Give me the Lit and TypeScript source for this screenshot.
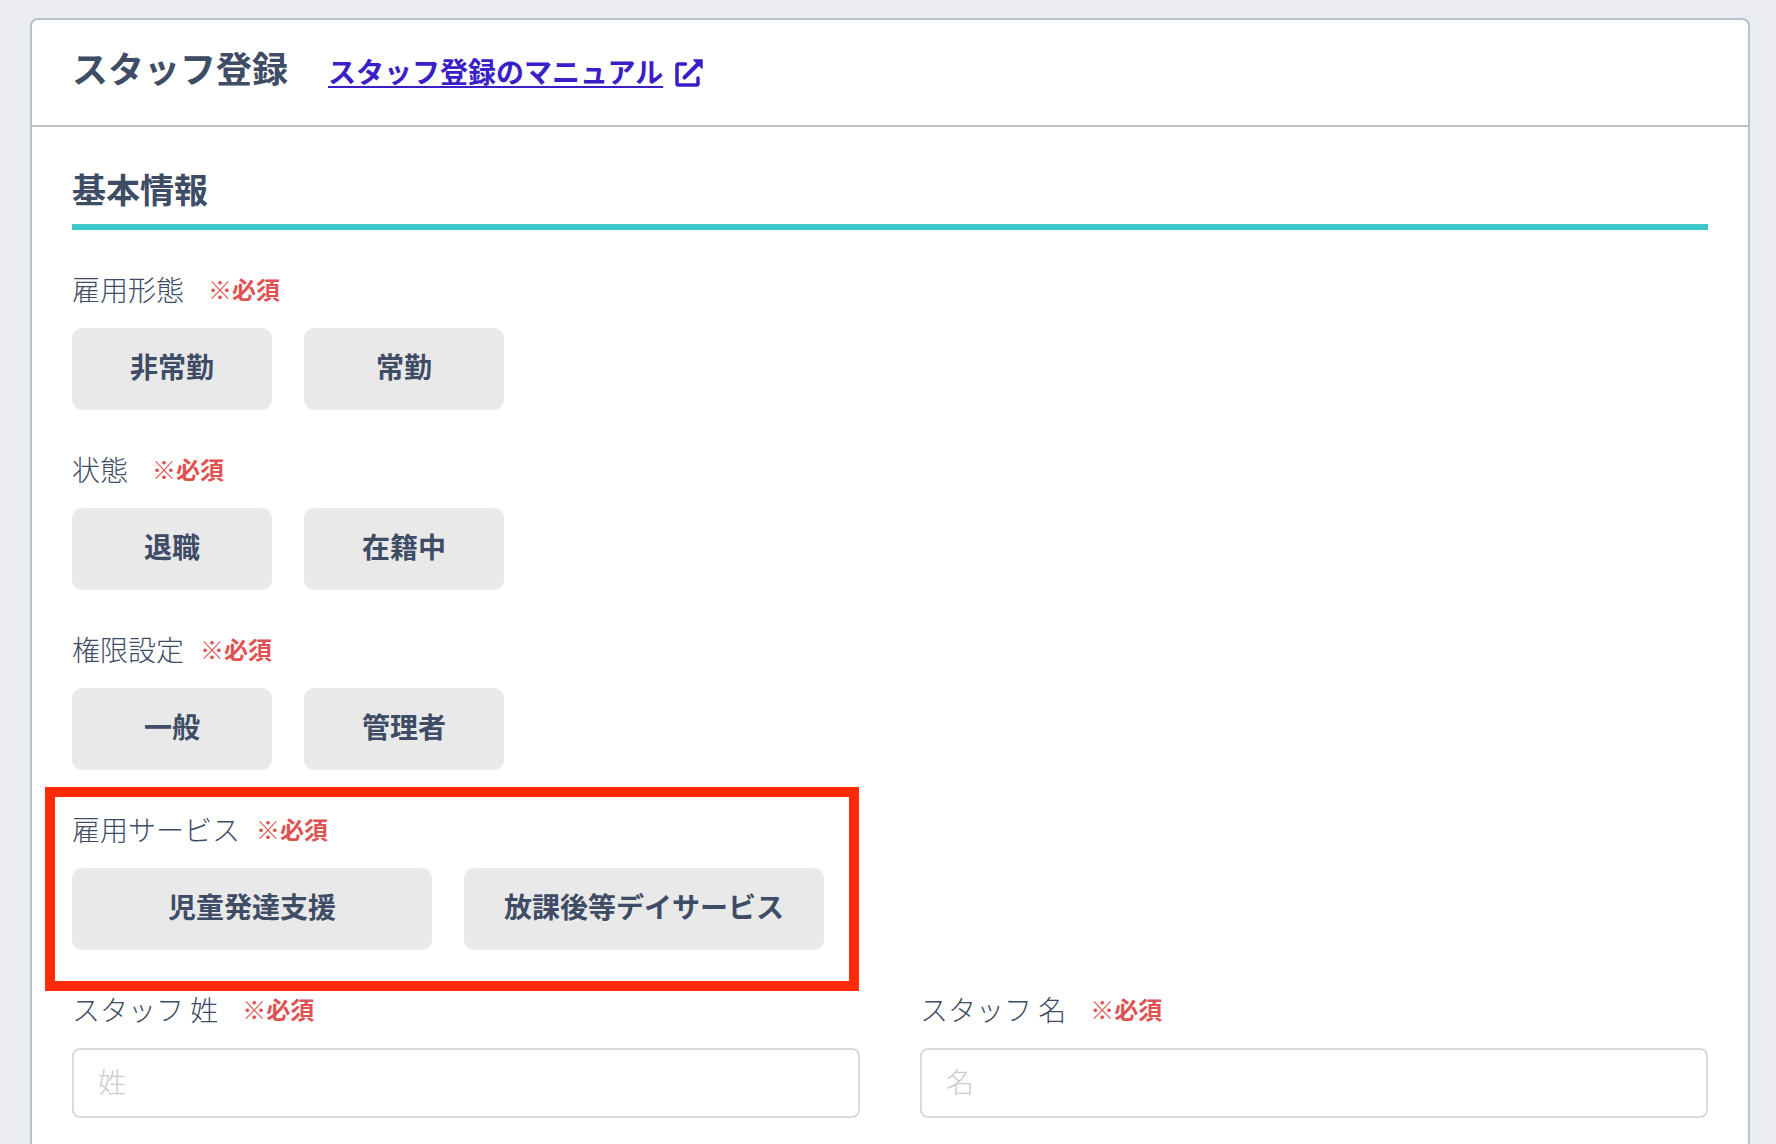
import { LitElement, html, css } from "lit";
import { customElement, property, state } from "lit/decorators.js";
import { classMap } from "lit/directives/class-map.js";

interface ChoiceField {
  id: string;
  label: string;
  options: string[];
  wide?: boolean;
  compact?: boolean;
  marked?: boolean;
}

interface TextField {
  id: string;
  label: string;
  placeholder: string;
}

const CHOICES: ChoiceField[] = [
  { id: "employment", label: "雇用形態", options: ["非常勤", "常勤"] },
  { id: "status", label: "状態", options: ["退職", "在籍中"] },
  { id: "role", label: "権限設定", options: ["一般", "管理者"], compact: true },
  {
    id: "service",
    label: "雇用サービス",
    options: ["児童発達支援", "放課後等デイサービス"],
    wide: true,
    compact: true,
    marked: true,
  },
];

const NAMES: TextField[] = [
  { id: "last-name", label: "スタッフ 姓", placeholder: "姓" },
  { id: "first-name", label: "スタッフ 名", placeholder: "名" },
];

const fieldStyles = css`
  .caption {
    display: flex;
    align-items: center;
    gap: 24px;
    margin-bottom: 18px;
    font-size: 28px;
    font-weight: 300;
    line-height: 42px;
    white-space: nowrap;
  }
  .caption.compact {
    gap: 16px;
  }
  .required {
    color: #e05252;
    font-size: 24px;
    font-weight: 700;
  }
`;

@customElement("choice-field")
export class ChoiceFieldElement extends LitElement {
  @property({ attribute: false }) field!: ChoiceField;
  @state() private selected = "";

  static styles = [
    fieldStyles,
    css`
      :host {
        display: block;
      }
      .group {
        position: relative;
        width: fit-content;
      }
      .marked::after {
        content: "";
        position: absolute;
        inset: -21px -35px -41px -27px;
        border: 10px solid #ff2a08;
        pointer-events: none;
      }
      .options {
        display: flex;
        gap: 32px;
      }
      .option {
        width: 200px;
        height: 82px;
        padding: 0 0 6px;
        border: 0;
        border-radius: 10px;
        background: #e9e9e9;
        color: inherit;
        font: inherit;
        font-size: 28px;
        font-weight: 700;
        line-height: 40px;
        cursor: pointer;
      }
      .option.wide {
        width: 360px;
      }
      .option.selected {
        background: #3cc8c8;
        color: #fff;
      }
    `,
  ];

  render() {
    const { id, label, options, wide = false, compact = false, marked = false } = this.field;
    return html`
      <div class=${classMap({ group: true, marked })} role="group" aria-labelledby=${id}>
        <div class=${classMap({ caption: true, compact })} id=${id}>
          <span>${label}</span><span class="required">※必須</span>
        </div>
        <div class="options">
          ${options.map(
            (option) => html`<button
              type="button"
              class=${classMap({ option: true, wide, selected: this.selected === option })}
              aria-pressed=${this.selected === option ? "true" : "false"}
              @click=${() => (this.selected = option)}
            >${option}</button>`,
          )}
        </div>
      </div>
    `;
  }
}

@customElement("text-field")
export class TextFieldElement extends LitElement {
  @property({ attribute: false }) field!: TextField;

  static styles = [
    fieldStyles,
    css`
      :host {
        display: block;
      }
      .input {
        display: block;
        box-sizing: border-box;
        width: 100%;
        height: 70px;
        padding: 0 24px 4px;
        border: 2px solid #dadada;
        border-radius: 8px;
        background: #fff;
        color: inherit;
        font: inherit;
        font-size: 28px;
        font-weight: 300;
      }
      .input::placeholder {
        color: #ccc;
        opacity: 1;
      }
    `,
  ];

  render() {
    const { id, label, placeholder } = this.field;
    return html`
      <label class="caption" for=${id}>
        <span>${label}</span><span class="required">※必須</span>
      </label>
      <input class="input" id=${id} type="text" placeholder=${placeholder} required />
    `;
  }
}

@customElement("app-root")
export class AppRoot extends LitElement {
  static styles = css`
    :host {
      display: flex;
      flex-direction: column;
      box-sizing: border-box;
      min-height: 100vh;
      padding: 18px 26px 0 30px;
      background: #eaecf0;
      color: #3f4c66;
      font-family: "Noto Sans CJK JP", sans-serif;
    }
    .card {
      flex: 1;
      border: 2px solid #b9c2c9;
      border-bottom: 0;
      border-radius: 8px 8px 0 0;
      background: #fff;
    }
    .header {
      display: flex;
      align-items: center;
      gap: 40px;
      height: 105px;
      padding: 0 40px;
      border-bottom: 2px solid #b9c2c9;
    }
    .title {
      margin: 0 0 12px;
      font-size: 36px;
      font-weight: 700;
      line-height: 52px;
    }
    .manual {
      display: flex;
      align-items: center;
      gap: 12px;
      color: #3a1fc8;
      font-size: 28px;
      font-weight: 700;
      line-height: 40px;
      text-decoration: none;
    }
    .manual-text {
      margin-bottom: 4px;
      text-decoration: underline;
      text-decoration-thickness: 2px;
      text-underline-offset: 3px;
      text-decoration-skip-ink: none;
    }
    .icon {
      display: block;
      width: 28px;
      height: 28px;
    }
    .body {
      display: grid;
      gap: 38px;
      padding: 36px 40px 26px;
    }
    .section {
      margin: 0;
      padding-bottom: 10px;
      border-bottom: 6px solid #3cc8c8;
      font-size: 34px;
      font-weight: 700;
      line-height: 51px;
    }
    .names {
      display: grid;
      grid-template-columns: 1fr 1fr;
      gap: 60px;
    }
  `;

  render() {
    return html`
      <main class="card">
        <header class="header">
          <h1 class="title">スタッフ登録</h1>
          <a class="manual" href="#manual">
            <span class="manual-text">スタッフ登録のマニュアル</span>
            <svg class="icon" viewBox="0 0 28 28" fill="none" stroke="currentColor" stroke-linecap="round" stroke-linejoin="round" aria-hidden="true">
              <path d="M10.500 5H3.500Q2 5 2 6.500V24.500Q2 26 3.500 26H21.500Q23 26 23 24.500V19" stroke-width="3.500" />
              <path d="M9.500 18.500L24 4" stroke-width="4" />
              <path d="M19 1H27V9Z" fill="currentColor" stroke-width="1.500" />
            </svg>
          </a>
        </header>
        <form class="body" @submit=${(e: Event) => e.preventDefault()}>
          <h2 class="section">基本情報</h2>
          ${CHOICES.map((field) => html`<choice-field .field=${field}></choice-field>`)}
          <div class="names">
            ${NAMES.map((field) => html`<text-field .field=${field}></text-field>`)}
          </div>
        </form>
      </main>
    `;
  }
}
